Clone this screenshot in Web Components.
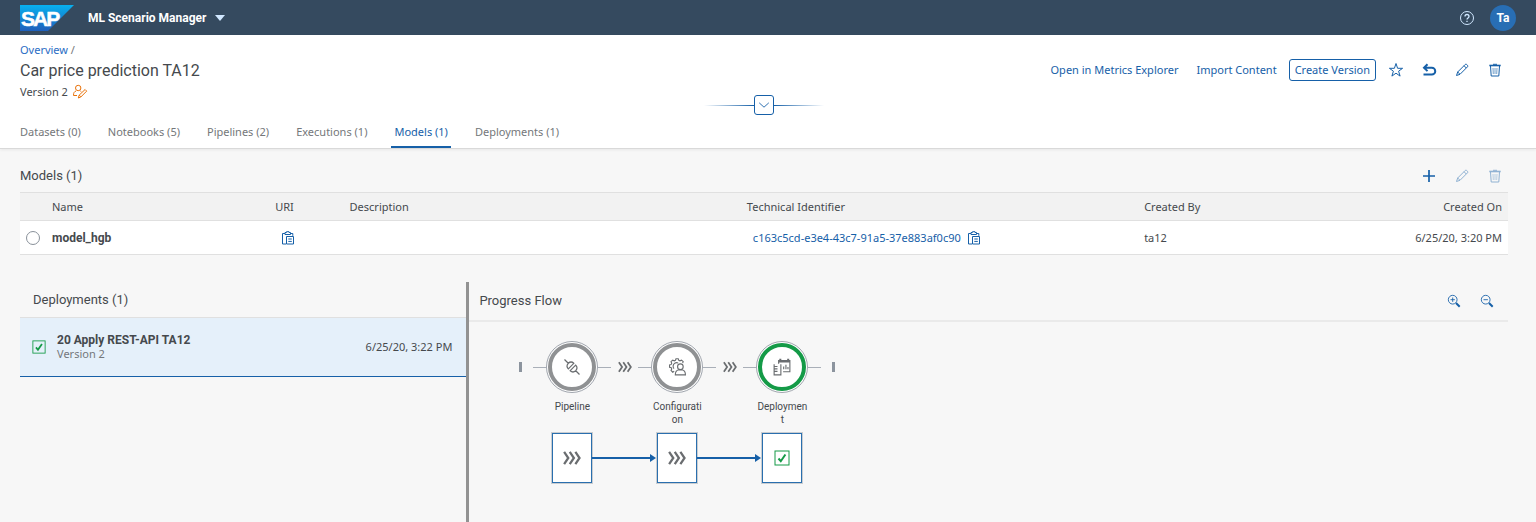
<!DOCTYPE html>
<html lang="en">
<head>
<meta charset="utf-8">
<title>ML Scenario Manager</title>
<style>
  html { height: 100%; }
  body {
    margin: 0; min-height: 100%; background: #f7f7f7; color: #45494d;
    font: 11px/16px "Noto Sans", "Liberation Sans", sans-serif;
    --brand: #1660a8; --line: #e0e0e0; --muted: #74777a; --ok: #149a47;
    --display: Roboto, "Liberation Sans", sans-serif;
  }
</style>
</head>
<body>
<scenario-app></scenario-app>
<script>
const define = (name, html, setup) => {
  const template = document.createElement('template');
  template.innerHTML = '<style>*{box-sizing:border-box}b,h1,h2{font-family:var(--display)}h2{font-size:13px;font-weight:400;margin:0}b{font-size:12px;font-weight:700}</style>' + html;
  customElements.define(name, class extends HTMLElement {
    constructor() {
      super();
      this.attachShadow({ mode: 'open' }).append(template.content.cloneNode(true));
    }
    connectedCallback() { if (setup) setup(this, this.shadowRoot); }
  });
};

const icons = {
  star: '<path d="M8 1.500l1.600 4.800h5L10.600 9.200l1.500 4.900L8 11.200l-4.100 2.900 1.500-4.900L1.400 6.300h5z"/>',
  undo: '<path d="M6.500 2.300L3 5.700l3.500 3.400M3.500 5.700h7.300a3.400 3.400 0 010 6.900H2.500" stroke-width="2"/>',
  edit: '<path d="M2.500 13.500l1.200-3.500 7.500-7.500a1 1 0 011.500 0l.8.8a1 1 0 010 1.500L6 12.300zM10 3.700l2.300 2.300M3.700 10L6 12.300"/>',
  trash: '<path d="M2.300 3.500h11.400" stroke-width="1.600"/><path d="M6 2.300h4M3.500 4l.7 10h7.600l.7-10"/><path d="M6 6l.3 6M8 6v6M10 6l-.3 6" stroke-opacity=".6"/>',
  add: '<path d="M8 2v12M2 8h12" stroke-width="1.700"/>',
  paste: '<path d="M6 14H2.500V3.500H5M10.500 3.500h2.300v2.300M5 4.500v-2h1.500V1.700h2.500v.8h1.500v2zM6.500 6.500h7v7.500h-7zM8.300 9h3.500M8.300 11.400h3.500"/>',
  zoomin: '<circle cx="6.500" cy="6.500" r="5"/><path d="M4 6.500h5M6.500 4v5"/><path d="M10.300 10.300l4.200 4.200" stroke-width="2.300"/>',
  zoomout: '<circle cx="6.500" cy="6.500" r="5"/><path d="M4 6.500h5"/><path d="M10.300 10.300l4.200 4.200" stroke-width="2.300"/>',
  help: '<circle cx="8" cy="8" r="6.500"/><path d="M6 6.500a2 2 0 114 0c0 1.400-2 1.500-2 3.100M8 10.700v1.300" stroke-width="1.300"/>',
  chevron: '<path d="M2.500 5.500L8 10.500l5.500-5"/>',
  owner: '<circle cx="6.200" cy="4" r="2.700"/><path d="M4 7C2.300 7.600 1.500 8.600 1.500 11.500H5M8.300 7l1 .6M6.300 14l.9-2.900 5.900-5.600 1.600 1.600L8.800 13zM7.200 11.100l1.700 1.700"/>',
  check: '<rect x="1" y="1" width="14" height="14"/><path d="M4.500 8.500l2.300 2.700 4.600-6.700" stroke-width="2"/>',
  arrows: '<path d="M1 2.500L4.700 8 1 13.500M6 2.500L9.700 8 6 13.500M11 2.500L14.700 8 11 13.500" stroke-width="2"/>',
  plug: '<path d="M.5.500l4 4M11.500 11.500l4 4M4.300 9.800a4 4 0 010-5.500 4 4 0 015.500 0zM6.200 11.700l5.500-5.500a4 4 0 010 5.500 4 4 0 01-5.500 0z" stroke-width="1.200"/>',
  configure: '<path d="M5.500 11.800L4.200 12.600 2.700 11.100 3.300 9.700 2.900 8.700 1.400 8.200V6.200l1.500-.5.4-1-.6-1.400 1.500-1.400 1.400.6 1-.4L7.100.7h2l.5 1.400 1 .4 1.400-.6 1.500 1.400-.5 1.200M5.300 9.500a3.300 3.300 0 01.500-4.700 3.300 3.300 0 013.200-.4"/><circle cx="11" cy="7.700" r="2.500"/><path d="M6.500 15c0-2.800 1.500-4.200 3-4.500h3c1.500.3 3 1.700 3 4.500z"/>',
  deploy: '<path d="M5 5V2.200h10v10H9M5 3h10" /><path d="M5 3h10M6.500.6v2M13.500.6v2" stroke-width="1.800"/><path d="M1 5.500V15h6V5.500M1 7.500h3M1 9.700h3M1 11.900h3M9.500 10V7.500M11.500 10V6M13.300 10V8"/>'
};
define('ui-icon', `<style>
  :host{display:inline-flex;flex:none;width:16px;height:16px;vertical-align:middle}
  :host([size="14"]){width:14px;height:14px} :host([size="18"]){width:18px;height:18px}
  svg{width:100%;height:100%;fill:none;stroke:currentColor;stroke-width:1;overflow:visible}
</style><svg viewBox="0 0 16 16" aria-hidden="true"></svg>`, (el, root) => {
  root.querySelector('svg').innerHTML = icons[el.getAttribute('name')];
});

define('icon-button', `<style>
  :host{display:block;width:33px;flex:none}
  button{width:100%;height:22px;border:0;background:none;padding:0;color:var(--brand);display:grid;place-items:center}
  button:disabled{opacity:.45}
</style><button type="button"><slot></slot></button>`, (el, root) => {
  const button = root.querySelector('button');
  button.setAttribute('aria-label', el.getAttribute('label'));
  button.disabled = el.hasAttribute('disabled');
});

define('shell-bar', `<style>
  :host{display:flex;align-items:center;height:35px;padding:0 20px;background:#354a5f;color:#fff}
  .logo{width:54px;height:26px;margin-right:14px}
  .app{border:0;background:none;color:inherit;font:bold 12px/16px var(--display);padding:0;display:flex;align-items:center;gap:9px}
  .app i{border:5px solid transparent;border-top:6px solid #d1e8ff;border-bottom:0}
  .space{flex:1}
  .help{color:#d1e8ff;border:0;background:none;padding:0;margin-right:15px;display:flex}
  .me{width:26px;height:26px;border:0;border-radius:50%;padding:0;background:#286eb4;color:#fff;font:bold 12px/26px var(--display)}
</style>
<svg class="logo" viewBox="0 0 54 26" role="img" aria-label="SAP">
  <defs><linearGradient id="g" x2="0" y2="1"><stop stop-color="#08b0ee"/><stop offset="1" stop-color="#1e5fbb"/></linearGradient></defs>
  <path d="M0 0h54L28 26H0z" fill="url(#g)"/>
  <text x="1" y="21" fill="#fff" font-family="Liberation Sans" font-weight="700" font-size="21" stroke="#fff" stroke-width=".5"><tspan>S</tspan><tspan dx="-2">A</tspan><tspan dx="-2">P</tspan></text>
</svg>
<button class="app" type="button">ML Scenario Manager<i></i></button>
<div class="space"></div>
<button class="help" type="button" aria-label="Help"><ui-icon name="help"></ui-icon></button>
<button class="me" type="button">Ta</button>`);

define('object-header', `<style>
  :host{display:block;background:#fff;border-bottom:1px solid #d9d9d9;box-shadow:0 1px 3px #0001;padding-top:7px}
  .top{display:flex;justify-content:space-between;padding:0 25px 0 20px}
  .crumb{color:var(--muted)} a{color:#2a6cc4;text-decoration:none}
  h1{font-size:16px;line-height:22px;font-weight:400;margin:2px 0}
  .version{display:flex;align-items:center;gap:4px;height:16px} .version ui-icon{color:#e9730c}
  .actions{display:flex;align-items:center;height:22px;margin-top:17px}
  .text{border:1px solid transparent;background:none;border-radius:3px;color:var(--brand);font:inherit;line-height:20px;height:22px;padding:0 5px}
  .text + .text{margin-left:6px}
  .text.outlined{border-color:var(--brand);margin-right:3px}
  .expand{display:flex;align-items:center;justify-content:center;height:20px;margin-top:-5px;padding-right:8px}
  .expand i{width:50px;height:1px;background:linear-gradient(90deg,transparent,var(--brand))}
  .expand i:last-child{background:linear-gradient(270deg,transparent,var(--brand))}
  .expand button{width:20px;height:20px;padding:0;border:1px solid var(--brand);border-radius:3px;background:#fff;color:var(--brand);display:grid;place-items:center}
</style>
<div class="top">
  <div>
    <div class="crumb"><a href="#overview">Overview</a> /</div>
    <h1>Car price prediction TA12</h1>
    <div class="version">Version 2 <ui-icon name="owner"></ui-icon></div>
  </div>
  <div class="actions">
    <button class="text" type="button">Open in Metrics Explorer</button>
    <button class="text" type="button">Import Content</button>
    <button class="text outlined" type="button">Create Version</button>
    <icon-button label="Favorite"><ui-icon name="star"></ui-icon></icon-button>
    <icon-button label="Undo"><ui-icon name="undo"></ui-icon></icon-button>
    <icon-button label="Edit"><ui-icon name="edit"></ui-icon></icon-button>
    <icon-button label="Delete"><ui-icon name="trash"></ui-icon></icon-button>
  </div>
</div>
<div class="expand"><i></i><button type="button" aria-label="Expand header"><ui-icon name="chevron" size="14"></ui-icon></button><i></i></div>
<slot></slot>`);

define('tab-strip', `<style>
  :host{display:flex;gap:21px;padding:0 17px;height:33px}
  ::slotted(a){padding:9px 3px 0;color:var(--muted);text-decoration:none}
  ::slotted(a[aria-current]){color:var(--brand);border-bottom:2px solid var(--brand)}
</style><slot></slot>`);

define('models-table', `<style>
  :host{display:block;padding:10px 28px 0 20px}
  header{display:flex;align-items:center;height:33px;margin-right:-3px}
  h2{line-height:18px;flex:1}
  table{width:100%;table-layout:fixed;border-collapse:collapse}
  th,td{padding:0 6px;text-align:left;white-space:nowrap;font-weight:400;border-bottom:1px solid var(--line)}
  th{height:28px;background:#f2f2f2;border-top:1px solid var(--line)}
  td{height:34px;background:#fff}
  .pick{width:26px} .name{width:15%} .uri{width:5%} .wide{width:26.7%}
  input{appearance:none;display:block;margin:0;width:14px;height:14px;border:1px solid #89919a;border-radius:50%;background:#fff}
  .end{text-align:right}
  .link{display:flex;align-items:center;gap:5px;padding-left:6px} a{color:var(--brand);text-decoration:none}
  .copy{border:0;background:none;color:var(--brand);padding:0;display:flex} .indent{margin-left:5px}
</style>
<header><h2>Models (1)</h2>
  <icon-button label="Add"><ui-icon name="add"></ui-icon></icon-button>
  <icon-button label="Edit" disabled><ui-icon name="edit"></ui-icon></icon-button>
  <icon-button label="Delete" disabled><ui-icon name="trash"></ui-icon></icon-button>
</header>
<table>
  <thead><tr><th class="pick"></th><th class="name">Name</th><th class="uri">URI</th><th class="wide">Description</th><th class="wide">Technical Identifier</th><th>Created By</th><th class="end">Created On</th></tr></thead>
  <tbody><tr>
    <td><input type="radio" name="model" aria-label="Select model_hgb"></td><td><b>model_hgb</b></td>
    <td><button class="copy indent" type="button" aria-label="Copy URI"><ui-icon name="paste"></ui-icon></button></td><td></td>
    <td><div class="link"><a href="#model">c163c5cd-e3e4-43c7-91a5-37e883af0c90</a><button class="copy" type="button" aria-label="Copy identifier"><ui-icon name="paste"></ui-icon></button></div></td>
    <td>ta12</td><td class="end">6/25/20, 3:20 PM</td>
  </tr></tbody>
</table>`);

define('deployment-list', `<style>
  :host{display:block}
  h2{line-height:36px;height:36px;padding-left:13px;border-bottom:1px solid var(--line)}
  .item{display:flex;align-items:center;height:59px;padding:0 14px 0 12px;background:#e5f0fa;border-bottom:1px solid var(--brand)}
  ui-icon{color:var(--ok);margin-right:11px}
  .names{flex:1;line-height:14px} small{display:block;font-size:11px;color:var(--muted)}
</style>
<h2>Deployments (1)</h2>
<div class="item"><ui-icon name="check" size="14"></ui-icon><div class="names"><b>20 Apply REST-API TA12</b><small>Version 2</small></div><time>6/25/20, 3:22 PM</time></div>`);

define('flow-step', `<style>
  :host{display:grid;grid-template-columns:13px 52px 13px;align-items:center;height:52px;--ring:#8f9193}
  :host([state="done"]){--ring:var(--ok)}
  i{height:1px;background:#a9afb8}
  .outer{width:52px;height:52px;border:1px solid #a0a5ad;border-radius:50%;padding:1px;background:#fff}
  .inner{width:48px;height:48px;border:4px solid var(--ring);border-radius:50%;display:grid;place-items:center;color:#6a6d70;background:#fff}
</style><i></i><div class="outer"><div class="inner"><slot></slot></div></div><i></i>`);

define('flow-box', `<style>
  :host{display:grid;place-items:center;width:40px;height:50px;background:#fff;border:1px solid #2a6fae;outline:1px solid #c9cdd1;color:#6a6d70}
  :host([state="done"]){color:var(--ok)}
</style><slot></slot>`);

define('progress-flow', `<style>
  :host{display:block}
  header{display:flex;align-items:center;height:40px;padding:0 5px 0 10px;border-bottom:2px solid #eaeaea}
  h2{line-height:18px;flex:1}
  .flow{display:grid;grid-template-columns:14px 78px 27px 78px 27px 78px 14px;width:max-content;justify-items:center;align-items:center;padding:19px 0 0 50px}
  .end{width:3px;height:10px;background:#8c949e}
  .end.first{justify-self:start} .end.last{justify-self:end}
  .arrow{color:#6a6d70}
  .label{width:52px;height:26px;margin:7px 0;font:10px/13px var(--display);text-align:center;word-break:break-all;align-self:start}
  .link{width:65px;display:flex;align-items:center}
  .link i{flex:1;height:2px;background:var(--brand)}
  .link b{border:4px solid transparent;border-left:6px solid var(--brand);border-right:0;margin-right:1px}
  .s1{grid-column:2} .s2{grid-column:4} .s3{grid-column:6} .l1{grid-column:3} .l2{grid-column:5}
</style>
<header><h2>Progress Flow</h2>
  <icon-button label="Zoom in"><ui-icon name="zoomin" size="14"></ui-icon></icon-button>
  <icon-button label="Zoom out"><ui-icon name="zoomout" size="14"></ui-icon></icon-button>
</header>
<div class="flow">
  <span class="end first"></span>
  <flow-step><ui-icon name="plug"></ui-icon></flow-step>
  <ui-icon class="arrow" name="arrows" size="14"></ui-icon>
  <flow-step><ui-icon name="configure" size="18"></ui-icon></flow-step>
  <ui-icon class="arrow" name="arrows" size="14"></ui-icon>
  <flow-step state="done"><ui-icon name="deploy" size="18"></ui-icon></flow-step>
  <span class="end last"></span>
  <div class="label s1">Pipeline</div><div class="label s2">Configuration</div><div class="label s3">Deployment</div>
  <flow-box class="s1"><ui-icon name="arrows" size="18"></ui-icon></flow-box>
  <div class="link l1"><i></i><b></b></div>
  <flow-box class="s2"><ui-icon name="arrows" size="18"></ui-icon></flow-box>
  <div class="link l2"><i></i><b></b></div>
  <flow-box class="s3" state="done"><ui-icon name="check"></ui-icon></flow-box>
</div>`);

define('scenario-app', `<style>
  :host{display:flex;flex-direction:column;min-height:100vh}
  .split{flex:1;display:grid;grid-template-columns:30% 1fr;margin:27px 28px 0 20px}
  progress-flow{border-left:3px solid #929292}
</style>
<shell-bar></shell-bar>
<object-header><tab-strip>
  <a href="#datasets">Datasets (0)</a><a href="#notebooks">Notebooks (5)</a><a href="#pipelines">Pipelines (2)</a><a href="#executions">Executions (1)</a><a href="#models" aria-current="page">Models (1)</a><a href="#deployments">Deployments (1)</a>
</tab-strip></object-header>
<models-table></models-table>
<div class="split"><deployment-list></deployment-list><progress-flow></progress-flow></div>`);
</script>
</body>
</html>
